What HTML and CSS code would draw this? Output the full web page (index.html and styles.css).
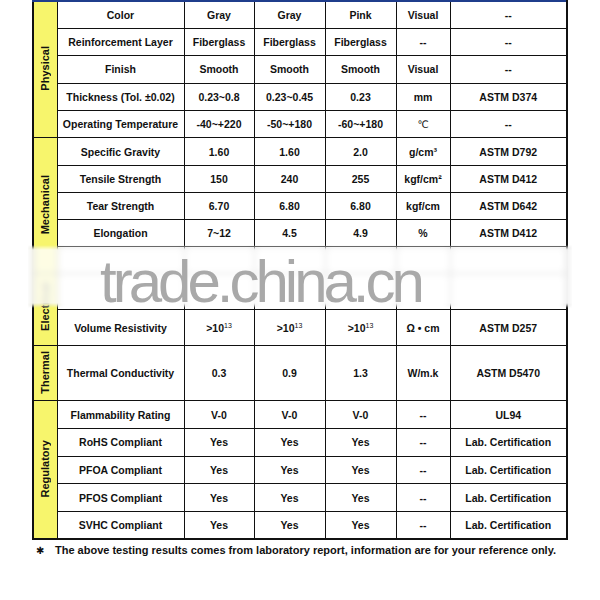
FILE: index.html
```html
<!DOCTYPE html>
<html>
<head>
<meta charset="utf-8">
<link rel="stylesheet" href="styles.css">
</head>
<body>
<div class="page">
  <table class="spec">
    <colgroup>
      <col class="c-cat"><col class="c-prop"><col class="c-v"><col class="c-v2"><col class="c-v2"><col class="c-unit"><col class="c-std">
    </colgroup>
    <tbody>
      <tr class="r-phy">
        <td class="cat" rowspan="5"><span class="vlabel">Physical</span></td>
        <td>Color</td><td>Gray</td><td>Gray</td><td>Pink</td><td>Visual</td><td>--</td>
      </tr>
      <tr class="r-phy"><td>Reinforcement Layer</td><td>Fiberglass</td><td>Fiberglass</td><td>Fiberglass</td><td>--</td><td>--</td></tr>
      <tr class="r-phy"><td>Finish</td><td>Smooth</td><td>Smooth</td><td>Smooth</td><td>Visual</td><td>--</td></tr>
      <tr class="r-phy"><td>Thickness (Tol. ±0.02)</td><td>0.23~0.8</td><td>0.23~0.45</td><td>0.23</td><td>mm</td><td>ASTM D374</td></tr>
      <tr class="r-phy"><td>Operating Temperature</td><td>-40~+220</td><td>-50~+180</td><td>-60~+180</td><td class="thin">℃</td><td>--</td></tr>

      <tr class="r-mec">
        <td class="cat" rowspan="5"><span class="vlabel">Mechanical</span></td>
        <td>Specific Gravity</td><td>1.60</td><td>1.60</td><td>2.0</td><td>g/cm³</td><td>ASTM D792</td>
      </tr>
      <tr class="r-mec"><td>Tensile Strength</td><td>150</td><td>240</td><td>255</td><td>kgf/cm²</td><td>ASTM D412</td></tr>
      <tr class="r-mec"><td>Tear Strength</td><td>6.70</td><td>6.80</td><td>6.80</td><td>kgf/cm</td><td>ASTM D642</td></tr>
      <tr class="r-mec"><td>Elongation</td><td>7~12</td><td>4.5</td><td>4.9</td><td>%</td><td>ASTM D412</td></tr>
      <tr class="r-hid"><td></td><td></td><td></td><td></td><td></td><td></td></tr>

      <tr class="r-hid2">
        <td class="cat cat-elec" rowspan="2"><span class="vlabel">Electrical</span></td>
        <td></td><td></td><td></td><td></td><td></td><td></td>
      </tr>
      <tr class="r-vr"><td>Volume Resistivity</td><td>&gt;10<sup>13</sup></td><td>&gt;10<sup>13</sup></td><td>&gt;10<sup>13</sup></td><td>Ω • cm</td><td>ASTM D257</td></tr>

      <tr class="r-th">
        <td class="cat"><span class="vlabel">Thermal</span></td>
        <td>Thermal Conductivity</td><td>0.3</td><td>0.9</td><td>1.3</td><td>W/m.k</td><td>ASTM D5470</td>
      </tr>

      <tr class="r-reg">
        <td class="cat" rowspan="5"><span class="vlabel">Regulatory</span></td>
        <td>Flammability Rating</td><td>V-0</td><td>V-0</td><td>V-0</td><td>--</td><td>UL94</td>
      </tr>
      <tr class="r-reg"><td>RoHS Compliant</td><td>Yes</td><td>Yes</td><td>Yes</td><td>--</td><td>Lab. Certification</td></tr>
      <tr class="r-reg"><td>PFOA Compliant</td><td>Yes</td><td>Yes</td><td>Yes</td><td>--</td><td>Lab. Certification</td></tr>
      <tr class="r-reg"><td>PFOS Compliant</td><td>Yes</td><td>Yes</td><td>Yes</td><td>--</td><td>Lab. Certification</td></tr>
      <tr class="r-reg"><td>SVHC Compliant</td><td>Yes</td><td>Yes</td><td>Yes</td><td>--</td><td>Lab. Certification</td></tr>
    </tbody>
  </table>

  <p class="note"><span class="star">✱</span>The above testing results comes from laboratory report, information are for your reference only.</p>

  <div class="band"></div>
  <div class="watermark">trade.china.cn</div>
</div>
</body>
</html>
```

FILE: styles.css
```css
html, body {
  margin: 0;
  padding: 0;
  background: #fff;
}

.page {
  position: relative;
  width: 600px;
  height: 600px;
  overflow: hidden;
  font-family: "Liberation Sans", Arial, sans-serif;
  color: #111;
}

.spec {
  margin-left: 32px;
  width: 534px;
  table-layout: fixed;
  border-collapse: collapse;
  border-top: 2px solid #1f3d8c;
  border-left: 2px solid #111;
  border-right: 2px solid #111;
  border-bottom: 2px solid #111;
  font-size: 10.5px;
  font-weight: bold;
}

.c-cat { width: 24px; }
.c-prop { width: 127px; }
.c-v { width: 70px; }
.c-v2 { width: 71px; }
.c-unit { width: 54px; }
.c-std { width: 117px; }

.spec td {
  border: 1px solid #111;
  text-align: center;
  vertical-align: middle;
  padding: 0 2px;
  white-space: nowrap;
  overflow: hidden;
}

.r-phy { height: 27.4px; }
.r-mec { height: 27.25px; }
.r-hid { height: 27px; }
.r-hid2 { height: 36px; }
.r-vr { height: 36px; }
.r-th { height: 55px; }
.r-reg { height: 27.6px; }

.spec td.cat {
  background: #f7f56c;
  padding: 0;
}

.vlabel {
  display: inline-block;
  writing-mode: vertical-rl;
  transform: rotate(180deg);
  font-size: 11px;
  font-weight: bold;
  line-height: 12px;
}

.cat-elec .vlabel {
  position: relative;
  top: -2px;
}

.thin {
  font-weight: normal;
  font-family: "DejaVu Sans", sans-serif;
  font-size: 10px;
}

sup {
  font-size: 7px;
  vertical-align: 4px;
  line-height: 0;
  font-weight: normal;
}

.note {
  margin: 3px 0 0 0;
  padding-left: 36px;
  font-size: 11px;
  font-weight: bold;
  line-height: 14px;
  white-space: nowrap;
}

.star {
  display: inline-block;
  width: 19px;
  font-family: "DejaVu Sans", sans-serif;
  font-size: 10px;
}

.band {
  position: absolute;
  left: 28px;
  top: 245px;
  width: 544px;
  height: 63px;
  background: rgba(255, 255, 255, 0.82);
  backdrop-filter: blur(3px);
  -webkit-mask-image: linear-gradient(to bottom, transparent 0, #000 5px, #000 58px, transparent 63px);
  mask-image: linear-gradient(to bottom, transparent 0, #000 5px, #000 58px, transparent 63px);
}

.watermark {
  position: absolute;
  left: 100px;
  top: 252px;
  font-family: "Liberation Sans", Arial, sans-serif;
  font-size: 60px;
  line-height: 60px;
  letter-spacing: -4px;
  color: #a9a9a9;
  font-weight: normal;
  white-space: nowrap;
}
```
